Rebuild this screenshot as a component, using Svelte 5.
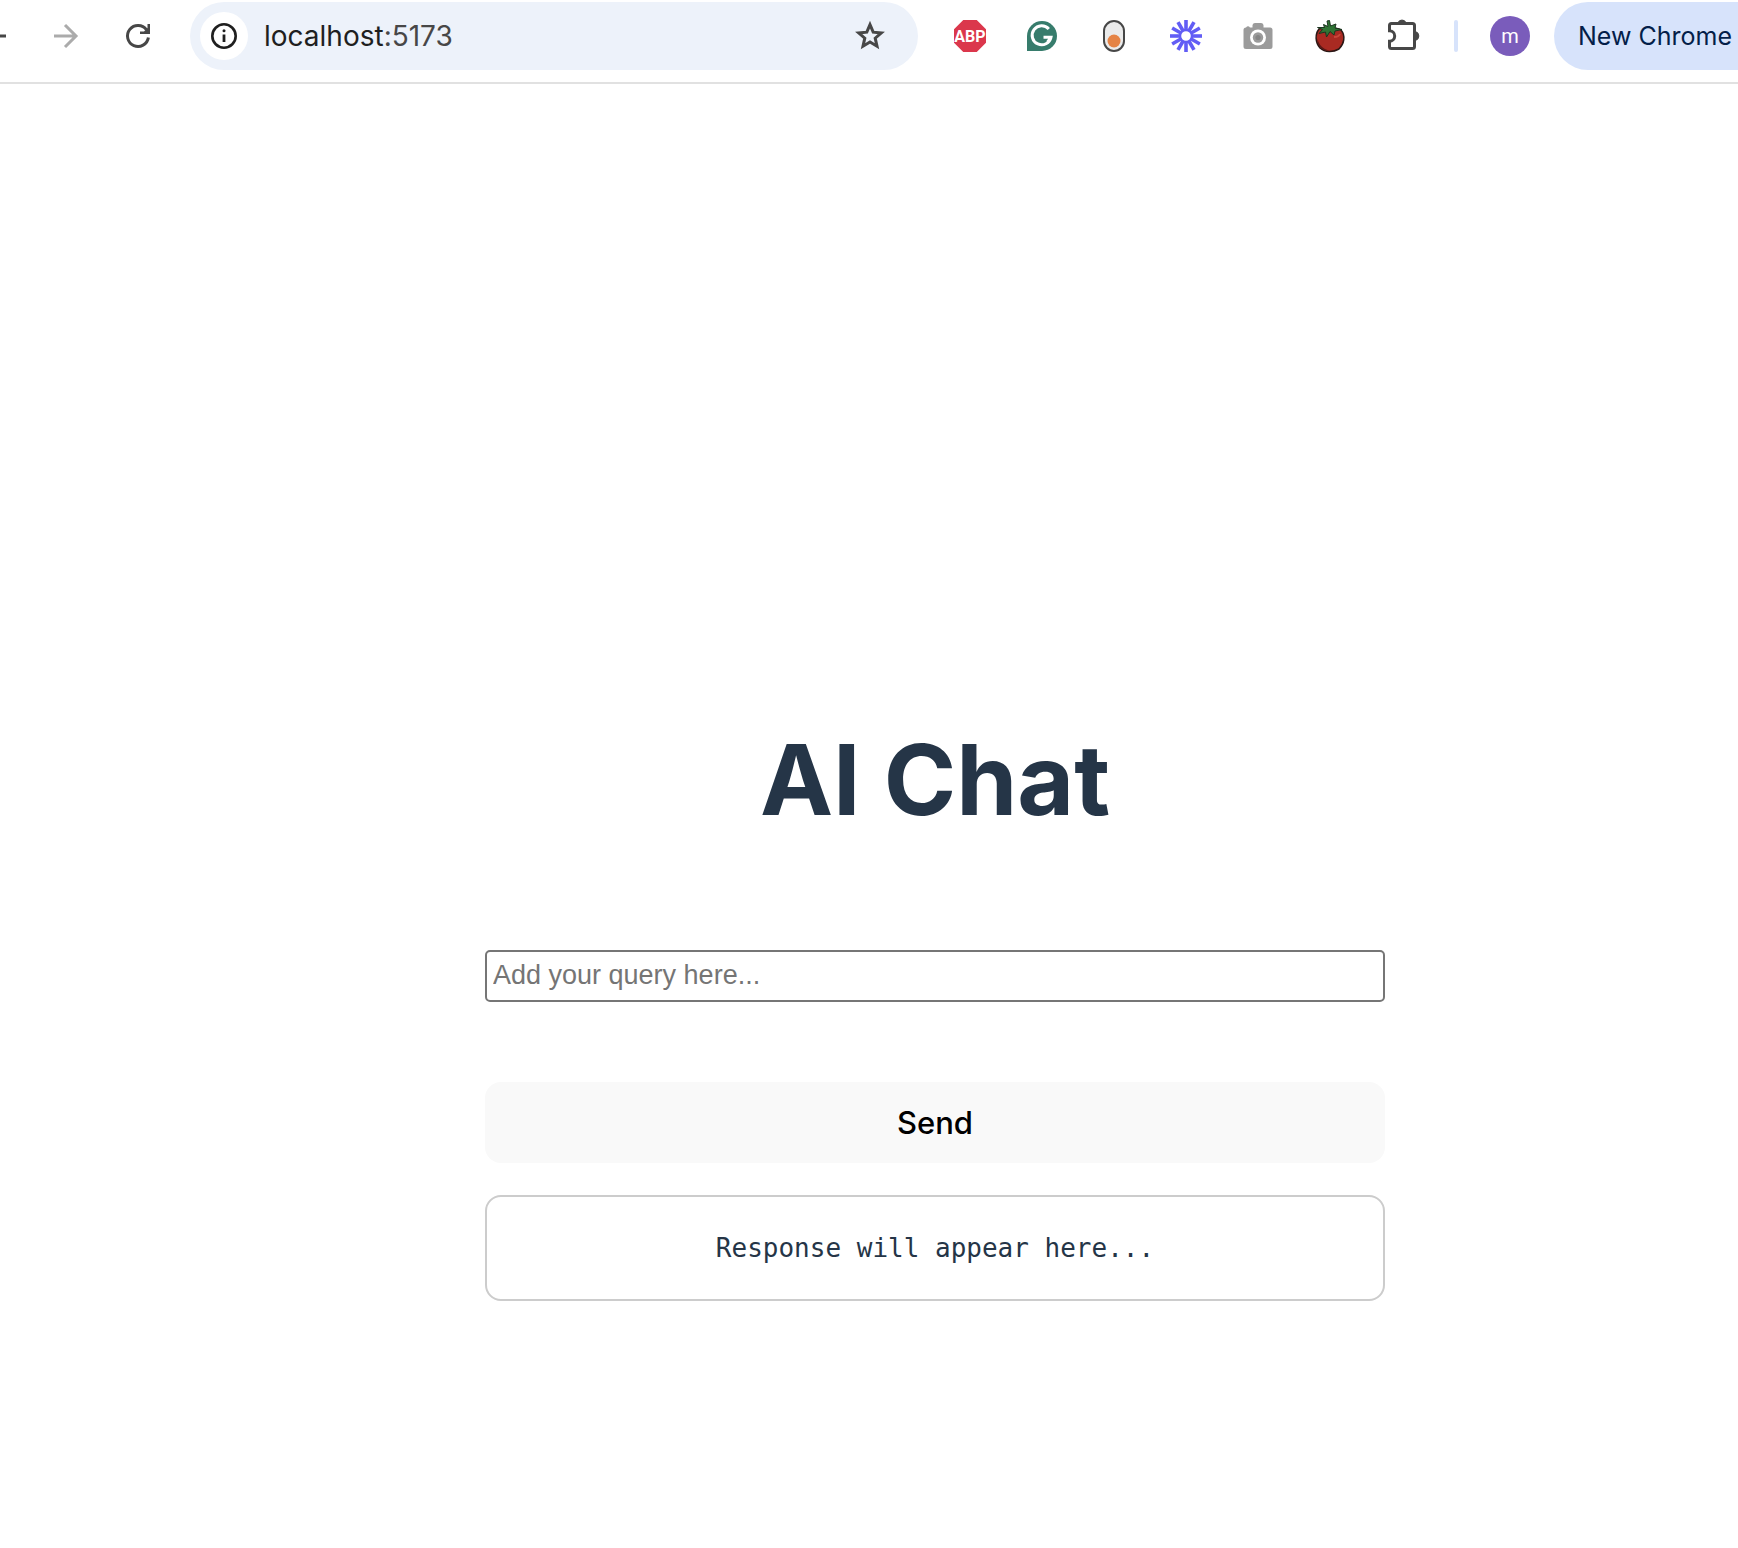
<script>
  let query = $state('');
  const rays = Array.from({ length: 12 }, (_, i) => i * 30);
</script>

<div class="window">
  <header class="toolbar">
    <nav class="nav" aria-label="Navigation">
      <button class="slot" aria-label="Back">
        <svg width="24" height="24" viewBox="0 0 24 24" fill="none" stroke="#474747" stroke-width="3"><path d="M24 12H2M13 1 2 12l11 11" /></svg>
      </button>
      <button class="slot" aria-label="Forward">
        <svg width="24" height="24" viewBox="0 0 24 24" fill="none" stroke="#ababab" stroke-width="3"><path d="M0 12H22M11 1l11 11-11 11" /></svg>
      </button>
      <button class="slot" aria-label="Reload">
        <svg width="24" height="24" viewBox="0 0 24 24" fill="none" stroke="#474747" stroke-width="3"><path d="M22.4 13.5A10.5 10.5 0 1 1 20.5 5.8" /><path d="M24 0v10H14V7.500h4L21.500 4V0z" fill="#474747" stroke="none" /></svg>
      </button>
    </nav>

    <div class="omnibox">
      <button class="info" aria-label="Site information">
        <svg width="26" height="26" viewBox="0 0 26 26" fill="none" stroke="#1f1f1f"><circle cx="13" cy="13" r="11.700" stroke-width="2.600" /><path d="M13 11.500v7.500" stroke-width="2.800" /><circle cx="13" cy="7.800" r="1.500" fill="#1f1f1f" stroke="none" /></svg>
      </button>
      <a class="url" href="http://localhost:5173">localhost<span>:5173</span></a>
      <button class="star" aria-label="Bookmark">
        <svg width="32" height="32" viewBox="0 0 32 32"><path d="M16 4.600 19.200 12.200 27.300 12.900 21.200 18.200 23 26.200 16 22 9 26.200 10.800 18.200 4.700 12.900 12.800 12.200Z" fill="none" stroke="#474747" stroke-width="3" /></svg>
      </button>
    </div>

    <div class="extensions">
      <button class="slot" aria-label="ABP">
        <span class="abp">ABP</span>
      </button>
      <button class="slot" aria-label="Writing assistant">
        <svg width="30" height="30" viewBox="0 0 30 30"><path d="M0 30V15A15 15 0 1 1 15 30Z" fill="#377c6c" /><path d="M21.800 8A9.500 9.500 0 1 0 24 16.200H16.500M24.300 16.200 20.700 20.600" fill="none" stroke="#fff" stroke-width="3" /></svg>
      </button>
      <button class="slot" aria-label="Toggle">
        <svg width="22" height="32" viewBox="0 0 22 32"><rect x="1" y="1" width="20" height="30" rx="10" fill="#ebebeb" stroke="#474747" stroke-width="2" /><circle cx="11" cy="21" r="6.500" fill="#e58345" /></svg>
      </button>
      <button class="slot" aria-label="Recorder">
        <svg width="32" height="32" viewBox="0 0 32 32" stroke="#625df5" stroke-width="3.600"><circle cx="16" cy="16" r="6" fill="none" stroke-width="2.400" />{#each rays as a}<path d="M16 10.500V0" transform="rotate({a} 16 16)" />{/each}</svg>
      </button>
      <button class="slot" aria-label="Screenshot">
        <svg width="30" height="28" viewBox="0 0 30 28"><path d="M3 5.500Q5 3 7 5.500H9.500V3Q10 1 12 1H18Q20 1 20.500 3V5.500H27Q29.500 5.500 29.500 8V24.500Q29.500 27 27 27H3Q.5 27 .5 24.500V8Q.5 5.500 3 5.500Z" fill="#9b9b9b" /><circle cx="15" cy="15.500" r="8" fill="#fff" /><circle cx="15" cy="15.500" r="5.200" fill="#9b9b9b" /><circle cx="15" cy="15.500" r="2.600" fill="#858585" /></svg>
      </button>
      <button class="slot" aria-label="Tomato timer">
        <svg width="30" height="32" viewBox="0 0 30 32"><path d="M4 9C8 7 22 7 26 10 31 16 29 24 24 29 18 32.500 10 32.500 5 28 0 22 0 14 4 9Z" fill="#a92a22" stroke="#2b1715" stroke-width="1.500" /><path d="M2.500 19C4 25 8 29 14 30.500L9 30C4 27 2 23 2.500 19Z" fill="#5a1815" /><path d="M19 17Q24 17 25 14" stroke="#c8463a" stroke-width="2" fill="none" /><path d="M12 1 14.500.5 15.500 6 21 4 20 8 27 9.500 20 11 19 15 15 11.500 11.500 17 10.500 12 4 13.500 7.500 9.500 2.500 7.500 9.500 7.500 8.500 4.500 13 6.500Z" fill="#2f7434" stroke="#1c3520" /></svg>
      </button>
      <button class="slot wide" aria-label="Extensions">
        <svg width="32" height="32" viewBox="0 2 32 32"><path d="M3.500 5.500H24.500Q26.500 5.500 26.500 7.500V28.500Q26.500 30.500 24.500 30.500H3.500Q1.500 30.500 1.500 28.500V23.200A5.200 5.200 0 0 0 1.500 12.800V7.500Q1.500 5.500 3.500 5.500Z" fill="none" stroke="#474747" stroke-width="3" /><path d="M10 4.500a4.500 4.500 0 0 1 8 0ZM27.500 13.500a4.700 4.700 0 0 1 0 9Z" fill="#474747" stroke="#474747" /></svg>
      </button>
    </div>

    <span class="divider"></span>
    <button class="avatar" aria-label="Profile">m</button>
    <button class="update">New Chrome</button>
  </header>

  <main>
    <form class="chat" onsubmit={(e) => e.preventDefault()}>
      <h1>AI Chat</h1>
      <input type="text" aria-label="Query" placeholder="Add your query here..." bind:value={query} />
      <button class="send" type="submit">Send</button>
      <output class="response">Response will appear here...</output>
    </form>
  </main>
</div>

<style>
  :global(body) { margin: 0; background: #fff; }
  .window {
    min-height: 100vh;
    display: flex;
    flex-direction: column;
    overflow: hidden;
    font-family: Inter, "Liberation Sans", sans-serif;
  }
  button { border: 0; padding: 0; margin: 0; background: none; font: inherit; cursor: pointer; }
  svg { display: block; overflow: visible; flex: none; }

  .toolbar {
    display: flex;
    align-items: center;
    padding: 2px 0 12px;
    border-bottom: 2px solid #e1e1e1;
  }
  .nav { width: 174px; display: flex; justify-content: flex-end; flex: none; }
  .slot { width: 72px; height: 68px; flex: none; display: flex; align-items: center; justify-content: center; }
  .slot.wide { width: 76px; }
  .omnibox {
    flex: 1;
    min-width: 0;
    height: 68px;
    margin: 0 16px;
    padding: 0 32px 0 10px;
    box-sizing: border-box;
    display: flex;
    align-items: center;
    border-radius: 34px;
    background: #edf2fa;
  }
  .info {
    width: 48px;
    height: 48px;
    flex: none;
    display: flex;
    align-items: center;
    justify-content: center;
    border-radius: 50%;
    background: #fff;
  }
  .url { flex: 1; margin-left: 16px; font-size: 28px; line-height: 36px; color: #1f1f1f; text-decoration: none; }
  .url span { color: #474747; }
  .extensions { display: flex; flex: none; }
  .abp {
    width: 32px;
    height: 32px;
    display: flex;
    align-items: center;
    justify-content: center;
    background: #db374c;
    clip-path: polygon(29% 0, 71% 0, 100% 29%, 100% 71%, 71% 100%, 29% 100%, 0 71%, 0 29%);
    color: #fff;
    font: 700 16px Roboto, sans-serif;
  }
  .divider { width: 4px; height: 32px; margin: 0 32px 0 12px; flex: none; border-radius: 2px; background: #d7e3fb; }
  .avatar {
    width: 40px;
    height: 40px;
    flex: none;
    border-radius: 50%;
    background: #7a5cbb;
    color: #fff;
    font: 20px/40px Roboto, sans-serif;
  }
  .update {
    width: 184px;
    height: 68px;
    margin-left: 24px;
    padding-left: 24px;
    flex: none;
    border-radius: 34px 0 0 34px;
    background: #d7e3fb;
    color: #041e49;
    font-size: 25px;
    text-align: left;
    white-space: nowrap;
  }

  main { flex: 1; display: flex; align-items: center; justify-content: center; padding: 392px 0 0 132px; }
  .chat { width: 900px; display: flex; flex-direction: column; color: #253547; }
  h1 { margin: 0 0 114px; font-size: 98px; line-height: 112px; font-weight: 700; text-align: center; }
  input {
    height: 52px;
    box-sizing: border-box;
    padding: 2px 6px;
    border: 2px solid #767676;
    border-radius: 5px;
    background: #fff;
    font: 27px "Liberation Sans", sans-serif;
  }
  input::placeholder { color: #757575; opacity: 1; }
  .send {
    height: 81px;
    margin: 80px 0 32px;
    border-radius: 16px;
    background: #f9f9f9;
    color: #000;
    font-size: 31px;
    font-weight: 500;
  }
  .response {
    padding: 32px;
    border: 2px solid #ccc;
    border-radius: 16px;
    font: 26px/38px "DejaVu Sans Mono", monospace;
    text-align: center;
  }
</style>
